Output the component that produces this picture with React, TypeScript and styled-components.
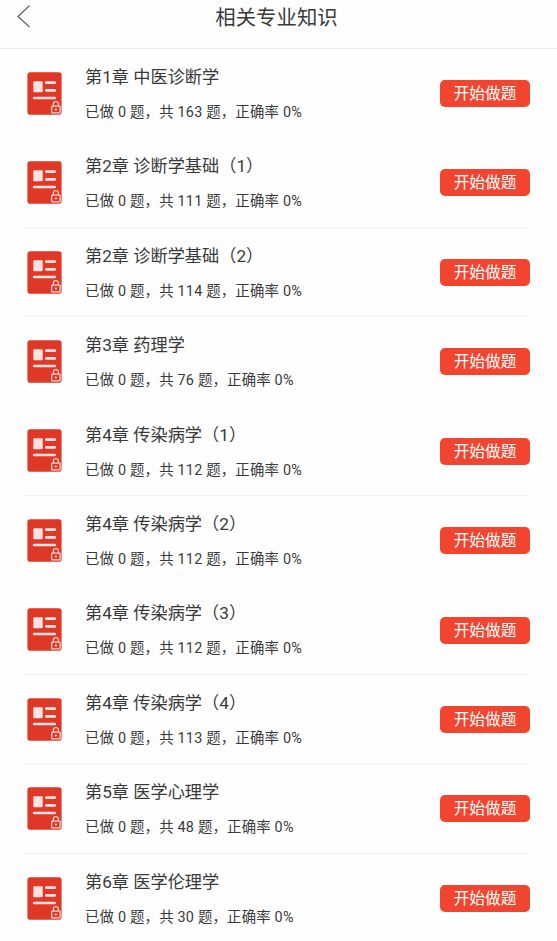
import React from "react";
import styled, { createGlobalStyle } from "styled-components";

const GlobalStyle = createGlobalStyle`
  * { box-sizing: border-box; }
  body {
    margin: 0;
    background: #fefefe;
    color: #3a3a3a;
    font-family: Roboto, "Noto Sans CJK SC", sans-serif;
  }
`;

const Page = styled.main`
  width: 100%;
  height: 941px;
  overflow: hidden;
`;

const Header = styled.header`
  display: grid;
  grid-template-columns: 58px 1fr 62px;
  align-items: start;
  height: 49px;
  border-bottom: 1px solid #ebebeb;
`;

const BackButton = styled.button`
  display: flex;
  padding: 4px 0 0 16px;
  border: 0;
  background: none;
`;

const PageTitle = styled.h1`
  margin: 0;
  padding-top: 1px;
  font-size: 20.4px;
  line-height: 34px;
  font-weight: 400;
  text-align: center;
`;

const ChapterList = styled.ul`
  margin: 0;
  padding: 0 28px 0 24px;
  list-style: none;
`;

const ChapterRow = styled.li<{ $divided: boolean }>`
  display: flex;
  align-items: center;
  height: 89.43px;
  padding-left: 3px;
  border-bottom: 1px solid ${(p) => (p.$divided ? "#f3f3f3" : "transparent")};
`;

const ChapterInfo = styled.div`
  flex: 1;
  margin-left: 23px;
  padding-top: 2.5px;
  white-space: nowrap;
`;

const ChapterTitle = styled.h2`
  margin: 0 0 11px;
  font-size: 17.2px;
  line-height: 26px;
  font-weight: 400;
`;

const Progress = styled.p`
  margin: 0;
  font-size: 14.4px;
  line-height: 24px;
  letter-spacing: 0.2px;
`;

const StartButton = styled.button`
  width: 90px;
  height: 27px;
  margin: 0.6px -1px 0 0;
  padding: 0;
  border: 0;
  border-radius: 5px;
  background: #f1452f;
  color: #fff;
  font-family: inherit;
  font-size: 15.7px;
  line-height: 27px;
`;

const BackIcon = () => (
  <svg width="15" height="24" viewBox="0 0 15 24" fill="none" stroke="#666" strokeWidth="1.3">
    <path d="M13.5 1.5 2 12.5l11.5 10.5" />
  </svg>
);

const LockedBookIcon = () => (
  <svg width="35" height="43" viewBox="0 0 35 43" fill="none">
    <rect x="0.4" y="0.3" width="34.2" height="42.4" rx="2.8" fill="#df3827" />
    <rect x="6.3" y="9.2" width="9.4" height="11" rx="1" fill="#fde4e2" />
    <path d="M19.3 10.7h8.4M19.3 18.4h8.4M7.2 26h20.5" stroke="#fde4e2" strokeWidth="2.7" strokeLinecap="round" />
    <rect x="24.7" y="34.2" width="8.4" height="6.7" rx="0.7" stroke="#ffd8d2" strokeWidth="1.2" />
    <path d="M26.4 34v-2a2.5 2.5 0 0 1 5 0v2" stroke="#ffd8d2" strokeWidth="1.2" />
    <circle cx="28.9" cy="37.5" r="1.1" fill="#ffe7e3" />
  </svg>
);

const chapters = [
  { title: "第1章 中医诊断学", total: 163, divided: false },
  { title: "第2章 诊断学基础（1）", total: 111, divided: true },
  { title: "第2章 诊断学基础（2）", total: 114, divided: true },
  { title: "第3章 药理学", total: 76, divided: false },
  { title: "第4章 传染病学（1）", total: 112, divided: true },
  { title: "第4章 传染病学（2）", total: 112, divided: false },
  { title: "第4章 传染病学（3）", total: 112, divided: true },
  { title: "第4章 传染病学（4）", total: 113, divided: true },
  { title: "第5章 医学心理学", total: 48, divided: true },
  { title: "第6章 医学伦理学", total: 30, divided: false },
];

export default function App() {
  return (
    <Page lang="zh-CN">
      <GlobalStyle />
      <Header>
        <BackButton aria-label="返回">
          <BackIcon />
        </BackButton>
        <PageTitle>相关专业知识</PageTitle>
      </Header>
      <ChapterList>
        {chapters.map((c) => (
          <ChapterRow key={c.title} $divided={c.divided}>
            <LockedBookIcon />
            <ChapterInfo>
              <ChapterTitle>{c.title}</ChapterTitle>
              <Progress>{`已做 0 题，共 ${c.total} 题，正确率 0%`}</Progress>
            </ChapterInfo>
            <StartButton>开始做题</StartButton>
          </ChapterRow>
        ))}
      </ChapterList>
    </Page>
  );
}
